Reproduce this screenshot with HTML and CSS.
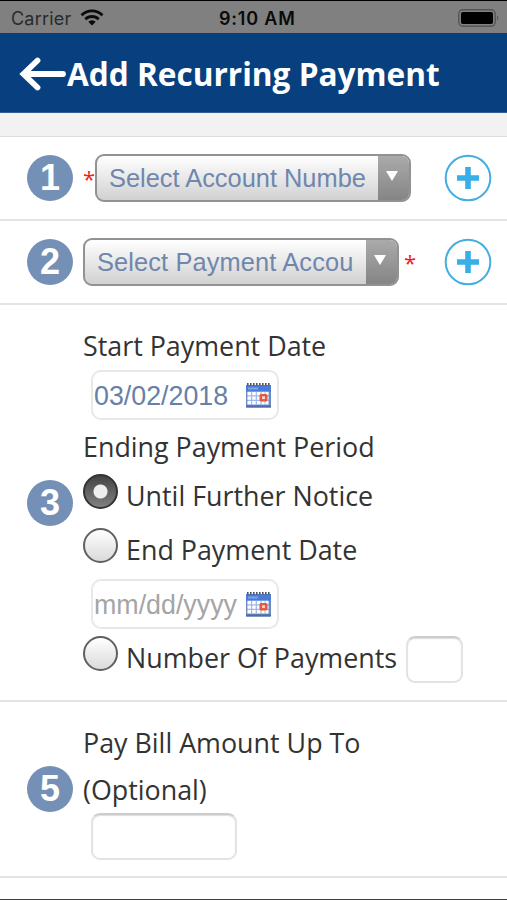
FILE: index.html
```html
<!DOCTYPE html>
<html lang="en">
<head>
<meta charset="utf-8">
<title>Add Recurring Payment</title>
<link rel="stylesheet" href="styles.css">
</head>
<body>
<svg class="defs" width="0" height="0" aria-hidden="true">
  <symbol id="calendar" viewBox="0 0 27 26">
    <rect x="1" y="3" width="25" height="22.5" rx="1" fill="#6d8cc4"/>
    <rect x="1" y="3" width="25" height="6.5" fill="#4b7bd9"/>
    <path d="M3 6.500h10" stroke="#7fa3ea" stroke-width="2"/>
    <path d="M2.500 9.500h21v13.500h-21z" fill="#9db7ea"/>
    <path d="M2.500 10h3.500v3.300h-3.500zM7.200 10h3.500v3.300h-3.500zM11.900 10h3.500v3.300h-3.500zM16.600 10h3v3.300h-3zM20.500 10h3v3.300h-3zM2.500 14.500h3.500v3.300h-3.500zM7.200 14.500h3.500v3.300h-3.500zM11.900 14.500h3.500v3.300h-3.500zM20.500 14.500h3v3.300h-3zM2.500 19h3.500v3.300h-3.500zM7.200 19h3.500v3.300h-3.500zM11.900 19h3.500v3.300h-3.500zM16.600 19h3v3.300h-3zM20.500 19h3v3.300h-3z" fill="#fff"/>
    <rect x="14.500" y="12" width="8" height="7.500" rx="1.500" fill="#e2593d"/>
    <rect x="17" y="14.300" width="3" height="2.800" fill="#fbd6cb"/>
    <path d="M1 24.500h25" stroke="#4c6ca3" stroke-width="2"/>
    <path d="M2 2.300h24" stroke="#555" stroke-width="2.600" stroke-dasharray="1.600 1.400"/>
  </symbol>
  <symbol id="plus" viewBox="0 0 48 48">
    <circle cx="24" cy="24" r="22.300" fill="#fff" stroke="#45aee0" stroke-width="2"/>
    <path d="M24 13v22M13 24h22" stroke="#36b0e6" stroke-width="5.600"/>
  </symbol>
</svg>
<div class="status">
  <span class="carrier">Carrier</span>
  <svg class="wifi" width="24" height="17" viewBox="0 0 24 17"><g fill="none" stroke="#0a0a0a" stroke-width="2.900"><path d="M1.500 6.200a15 15 0 0 1 21 0"/><path d="M5.300 10.200a9.600 9.600 0 0 1 13.400 0"/></g><path d="M8.300 12.700a5.300 5.300 0 0 1 7.400 0L12 16.500z" fill="#0a0a0a"/></svg>
  <span class="time">9:10 AM</span>
  <svg class="battery" width="42" height="18" viewBox="0 0 42 18"><rect x=".8" y=".8" width="36.400" height="16.400" rx="4" fill="none" stroke="#555" stroke-width="1.400"/><rect x="3" y="3" width="32" height="12" rx="1.800" fill="#000"/><path d="M39 6.500q2.500 2.500 0 5z" fill="#555"/></svg>
</div>
<header class="header">
  <svg class="back" width="47" height="36" viewBox="0 0 47 36"><path d="M44 18H5M18.500 4.500L4.500 18L18.500 31.500" fill="none" stroke="#fff" stroke-width="5.800" stroke-linecap="round"/></svg>
  <h1 class="title">Add Recurring Payment</h1>
</header>
<div class="band"></div>
<main>
  <section class="row">
    <span class="step">1</span>
    <div class="field">
      <span class="required before">*</span>
      <div class="select"><span class="select-text">Select Account Numbe</span><span class="select-arrow"></span></div>
    </div>
    <svg class="add" width="48" height="48"><use href="#plus"/></svg>
  </section>
  <section class="row">
    <span class="step">2</span>
    <div class="field">
      <div class="select"><span class="select-text wide">Select Payment Account</span><span class="select-arrow"></span></div>
      <span class="required after">*</span>
    </div>
    <svg class="add" width="48" height="48"><use href="#plus"/></svg>
  </section>
  <section class="row dates">
    <span class="step">3</span>
    <div class="column">
      <p class="label start">Start Payment Date</p>
      <div class="date"><span>03/02/2018</span><svg class="calendar" width="27" height="26"><use href="#calendar"/></svg></div>
      <p class="label ending">Ending Payment Period</p>
      <div class="option first"><span class="radio checked"></span><span class="label">Until Further Notice</span></div>
      <div class="option"><span class="radio"></span><span class="label">End Payment Date</span></div>
      <div class="date empty"><span>mm/dd/yyyy</span><svg class="calendar" width="27" height="26"><use href="#calendar"/></svg></div>
      <div class="option last"><span class="radio"></span><span class="label">Number Of Payments</span><span class="input count"></span></div>
    </div>
  </section>
  <section class="row amount">
    <span class="step">5</span>
    <div class="column">
      <p class="label pay">Pay Bill Amount Up To<br>(Optional)</p>
      <span class="input sum"></span>
    </div>
  </section>
</main>
<footer class="edge"></footer>
</body>
</html>
```
FILE: styles.css
```css
* { box-sizing: border-box; }
body {
  margin: 0;
  width: 507px;
  height: 900px;
  overflow: hidden;
  display: flex;
  flex-direction: column;
  background: #fff;
  color: #333;
  font-family: "Open Sans", "Noto Sans", sans-serif;
}
p, h1 { margin: 0; }
.defs { position: absolute; }
.status {
  height: 33px;
  flex: none;
  display: grid;
  grid-template-columns: 69px 139px 1fr 49px;
  align-items: center;
  padding: 3px 0 0 11px;
  border-top: 1px solid #000;
  background: #808080;
  color: #111;
  font: 18px/24px Inter, sans-serif;
}
.carrier { color: #2a2a2a; letter-spacing: .2px; }
.time { grid-column: 3; color: #0a0a0a; font-weight: 600; letter-spacing: .8px; }
.wifi { grid-column: 2; margin-top: -3px; }
.battery { margin-top: -2px; }
.status > * { grid-row: 1; }
.header {
  height: 80px;
  flex: none;
  display: flex;
  align-items: center;
  padding-left: 19px;
  background: #083f7e;
  border-bottom: 1px solid #335f93;
}
.back { margin-top: 2px; }
.title {
  margin: 2px 0 0 1px;
  color: #fff;
  font-size: 31.6px;
  line-height: 44px;
  font-weight: 700;
  white-space: nowrap;
}
.band { height: 24px; flex: none; background: #f2f2f2; border-bottom: 1px solid #dedede; }
.row {
  height: 84px;
  display: flex;
  align-items: center;
  padding-left: 27px;
  border-bottom: 2px solid #e3e3e3;
}
.step {
  width: 46px;
  height: 46px;
  flex: none;
  border-radius: 50%;
  background: #7590b7;
  color: #fff;
  font: 700 36px/46px "Liberation Sans", sans-serif;
  text-align: center;
}
.field { width: 371px; display: flex; align-items: center; padding-left: 10px; }
.required { color: #f21d1d; font: 22px/40px "Open Sans", sans-serif; }
.before { width: 12px; }
.after { margin-left: 5px; }
.select {
  width: 316px;
  height: 48px;
  display: flex;
  overflow: hidden;
  border: 2px solid #929292;
  border-radius: 9px;
  background: linear-gradient(#fff, #d1d1d1);
}
.select-text {
  width: 257px;
  margin: 0 12px;
  overflow: hidden;
  white-space: nowrap;
  color: #6f87ad;
  font: 25.4px/44px "Liberation Sans", sans-serif;
}
.wide { width: 256px; margin-right: 13px; letter-spacing: .12px; }
.select-arrow {
  flex: 1;
  display: flex;
  justify-content: center;
  padding: 15px 3px 0 0;
  background: linear-gradient(#aaa, #858585);
}
.select-arrow::before {
  content: "";
  height: 0;
  border: 6px solid transparent;
  border-top: 10px solid #fff;
  border-bottom: 0;
}
.dates { height: 397px; }
.column { width: 400px; height: 100%; padding-left: 10px; }
.label { color: #333; font-size: 26.85px; line-height: 47px; white-space: nowrap; }
.start { padding-top: 17px; }
.date {
  width: 188px;
  height: 50px;
  display: flex;
  align-items: center;
  justify-content: space-between;
  margin: 1px 0 0 8px;
  padding: 0 5px 0 1px;
  border: 2px solid #e8e8e8;
  border-radius: 10px;
  color: #6780a8;
  font: 26.8px/46px "Liberation Sans", sans-serif;
}
.date span { padding-top: 2px; }
.calendar { flex: none; margin-top: -1px; }
.empty { color: #a5a5a5; margin-top: 3px; }
.ending { padding-top: 3px; }
.option { height: 54px; display: flex; align-items: center; }
.first { margin-top: -2px; }
.radio {
  width: 35px;
  height: 35px;
  margin: -8px 8px 0 0;
  border: 2px solid #606060;
  border-radius: 50%;
  background: linear-gradient(#fff, #dadada);
}
.checked {
  border-color: #333;
  background: radial-gradient(circle, #eee 0 6.500px, transparent 7.500px), linear-gradient(#444, #808080);
}
.last { height: 57px; }
.last .radio { margin-top: -9px; }
.input {
  border: 2px solid #e3e3e3;
  border-top-color: #cdcdcd;
  border-radius: 9px;
  background: #fff;
  box-shadow: inset 0 1px 1px #ddd;
}
.count { width: 57px; height: 47px; margin: 3px 0 0 9px; }
.amount { height: 176px; }
.pay { padding-top: 17px; }
.sum { display: block; width: 146px; height: 47px; margin: 0 0 0 8px; }
.edge { margin-top: auto; height: 1px; flex: none; background: #404040; }
```
